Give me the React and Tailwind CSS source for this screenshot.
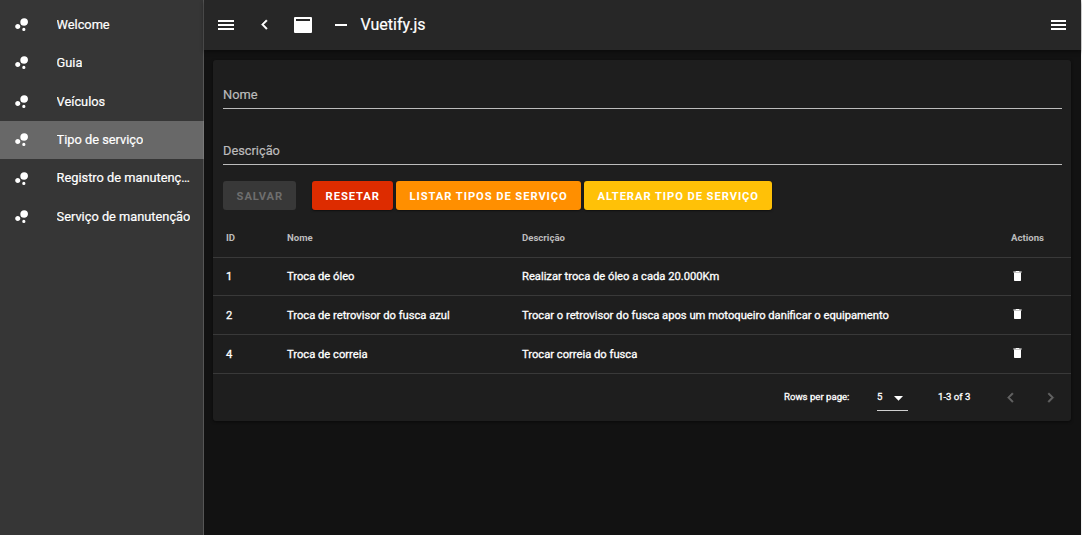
const navItems = [
  { label: "Welcome", size: "h-[38px]" },
  { label: "Guia", size: "h-[38px]" },
  { label: "Veículos", size: "h-[39px] pt-[1px]" },
  { label: "Tipo de serviço", size: "h-[38px]", active: true },
  { label: "Registro de manutenção", size: "h-[38px]", iconShift: "mt-[2px]" },
  { label: "Serviço de manutenção", size: "h-[39px] pt-[1px]" },
];

const rows = [
  { id: 1, nome: "Troca de óleo", descricao: "Realizar troca de óleo a cada 20.000Km", height: "h-[38px]", icon: "mb-[1px]" },
  { id: 2, nome: "Troca de retrovisor do fusca azul", descricao: "Trocar o retrovisor do fusca apos um motoqueiro danificar o equipamento", height: "h-[39px]", icon: "mb-[2px]" },
  { id: 4, nome: "Troca de correia", descricao: "Trocar correia do fusca", height: "h-[39px]", icon: "mb-[2px]" },
];

function Icon({ d, className }) {
  return (
    <svg viewBox="0 0 24 24" fill="currentColor" className={`shrink-0 ${className}`}>
      <path d={d} />
    </svg>
  );
}

const bubble =
  "M7.2,11.2C8.97,11.2 10.4,12.63 10.4,14.4C10.4,16.17 8.97,17.6 7.2,17.6C5.43,17.6 4,16.17 4,14.4C4,12.63 5.43,11.2 7.2,11.2M14.8,16A2,2 0 0,1 16.8,18A2,2 0 0,1 14.8,20A2,2 0 0,1 12.8,18A2,2 0 0,1 14.8,16M15.2,4A4.8,4.8 0 0,1 20,8.8C20,11.45 17.85,13.6 15.2,13.6A4.8,4.8 0 0,1 10.4,8.8C10.4,6.15 12.55,4 15.2,4Z";
const chevronLeft = "M15.41,16.58L10.83,12L15.41,7.41L14,6L8,12L14,18L15.41,16.58Z";
const chevronRight = "M8.59,16.58L13.17,12L8.59,7.41L10,6L16,12L10,18L8.59,16.58Z";

function MenuIcon({ className }) {
  return (
    <svg viewBox="0 0 16 10" preserveAspectRatio="none" fill="currentColor" className={`shrink-0 ${className}`}>
      <path d="M0,0H16V2H0ZM0,4H16V6H0ZM0,8H16V10H0Z" />
    </svg>
  );
}

function TrashIcon({ className }) {
  return (
    <svg viewBox="0 0 9 10" fill="currentColor" className={`ml-[2px] h-[10px] w-[9px] ${className}`}>
      <path d="M0.3,0.4H2.6L3,0H6L6.4,0.4H8.7V1.4H0.3ZM1,1.7H8V9.3Q8,10 7.3,10H1.7Q1,10 1,9.3Z" />
    </svg>
  );
}

function Field({ label, className }) {
  return (
    <div className={`flex items-center border-b border-[#bcbcbc] pt-[2px] text-[12.8px] text-[#bcbcbc] [-webkit-text-stroke:0.2px] ${className}`}>
      {label}
    </div>
  );
}

function Button({ children, className }) {
  return (
    <button className={`flex h-[29px] items-center rounded-[3px] pl-[13.6px] pt-[3px] text-[11.2px] font-bold tracking-[0.93px] whitespace-nowrap ${className}`}>
      {children}
    </button>
  );
}

const columns = "grid grid-cols-[61px_235px_489px_1fr] items-center border-b border-[#393939] pl-[13px]";

export default function App() {
  return (
    <div className="flex h-[535px] w-[1082px] overflow-hidden bg-[#121212] font-['Roboto',sans-serif] text-white">
      <aside className="w-[204px] shrink-0 border-r border-[#565656] bg-[#363636] pt-[6px]">
        <nav>
          {navItems.map((item) => (
            <a
              key={item.label}
              className={`flex items-center pl-[11.6px] ${item.size} ${item.active ? "mr-[-1px] border-r border-[#7a7a7a] bg-[#686868] pr-[12px]" : "pr-[12px]"}`}
            >
              <Icon d={bubble} className={`size-[19.2px] ${item.iconShift ?? ""}`} />
              <span className="ml-[25.8px] truncate text-[12.8px] [-webkit-text-stroke:0.2px]">{item.label}</span>
            </a>
          ))}
        </nav>
      </aside>

      <div className="flex min-w-0 flex-1 flex-col border-r border-[#f4f4f4]">
        <header className="flex h-[50px] shrink-0 items-center bg-[#272727] pl-[14px] pr-[15px] shadow-[0_2px_4px_rgba(0,0,0,0.4)]">
          <MenuIcon className="h-[10px] w-[16px]" />
          <Icon d={chevronLeft} className="ml-[21px] size-[19.2px] stroke-current [stroke-width:0.6]" />
          <svg viewBox="0 0 18 16" className="ml-[19.8px] h-[16px] w-[18px] shrink-0" fill="currentColor" fillRule="evenodd">
            <path d="M1,0H17Q18,0 18,1V15Q18,16 17,16H1Q0,16 0,15V1Q0,0 1,0ZM2,2V4H16V2Z" />
          </svg>
          <span className="ml-[23px] h-[2px] w-[12px] bg-white" />
          <h1 className="ml-[13.6px] text-[16px] leading-none [-webkit-text-stroke:0.2px]">Vuetify.js</h1>
          <MenuIcon className="ml-auto h-[10px] w-[15px]" />
        </header>

        <main className="ml-[9px] mr-[10px] mt-[10px] h-[361px] rounded-[3px] bg-[#1e1e1e] shadow-[0_1px_3px_rgba(0,0,0,0.5)]">
          <div className="pl-[10px] pr-[9px] pt-[20px]">
            <Field label="Nome" className="h-[29px]" />
            <Field label="Descrição" className="mt-[27px] h-[29px]" />
          </div>

          <div className="mt-[16px] flex pl-[10px]">
            <Button className="w-[73px] bg-[#383838] text-[#6e6e6e]">SALVAR</Button>
            <Button className="ml-[16px] w-[81px] bg-[#dd2c00] shadow-[0_1px_2px_rgba(0,0,0,0.5)]">RESETAR</Button>
            <Button className="ml-[3px] w-[185px] bg-[#ff8f00] shadow-[0_1px_2px_rgba(0,0,0,0.5)]">LISTAR TIPOS DE SERVIÇO</Button>
            <Button className="ml-[3px] w-[188px] bg-[#ffc107] shadow-[0_1px_2px_rgba(0,0,0,0.5)]">ALTERAR TIPO DE SERVIÇO</Button>
          </div>

          <div className={`${columns} h-[48px] pt-[10px] text-[9.6px] font-bold text-[#bcbcbc]`}>
            <span>ID</span>
            <span>Nome</span>
            <span>Descrição</span>
            <span>Actions</span>
          </div>
          {rows.map((row) => (
            <div key={row.id} className={`${columns} ${row.height} text-[11.2px] [-webkit-text-stroke:0.3px]`}>
              <span className="pt-[2px]">{row.id}</span>
              <span className="pt-[2px]">{row.nome}</span>
              <span className="pt-[2px]">{row.descricao}</span>
              <TrashIcon className={row.icon} />
            </div>
          ))}

          <footer className="flex h-[47px] items-center pl-[571px] text-[9.6px] [-webkit-text-stroke:0.3px]">
            <span className="w-[93px]">Rows per page:</span>
            <div className="mt-[1px] flex h-[26px] w-[31px] items-center justify-between border-b border-[#d0d0d0]">
              <span>5</span>
              <svg viewBox="0 0 9 5" className="mr-[5px] mt-[2px] h-[5px] w-[9px]" fill="currentColor">
                <path d="M0,0H9L4.5,4.8Z" />
              </svg>
            </div>
            <span className="ml-[30px] w-[63px]">1-3 of 3</span>
            <Icon d={chevronLeft} className="mt-[1px] size-[19.2px] stroke-current text-[#626262] [stroke-width:0.6]" />
            <Icon d={chevronRight} className="ml-[21px] mt-[1px] size-[19.2px] stroke-current text-[#626262] [stroke-width:0.6]" />
          </footer>
        </main>
      </div>
    </div>
  );
}
